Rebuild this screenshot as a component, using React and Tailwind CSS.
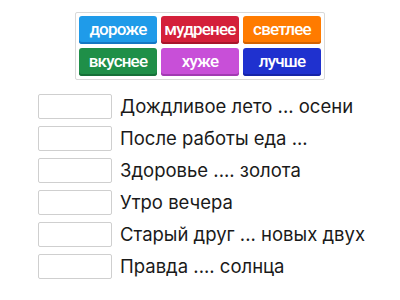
import React from "react";

const words = [
  { t: "дороже", c: "bg-[#1f9be9]", s: "shadow-[inset_0_-2px_0_#1577c4]" },
  { t: "мудренее", c: "bg-[#d4203a]", s: "shadow-[inset_0_-2px_0_#a8152b]" },
  { t: "светлее", c: "bg-[#ff7b00]", s: "shadow-[inset_0_-2px_0_#d46300]" },
  { t: "вкуснее", c: "bg-[#1f8f48]", s: "shadow-[inset_0_-2px_0_#167038]" },
  { t: "хуже", c: "bg-[#c84fd8]", s: "shadow-[inset_0_-2px_0_#a23ab2]" },
  { t: "лучше", c: "bg-[#1f31cf]", s: "shadow-[inset_0_-2px_0_#1624a8]" },
];

const rows = [
  "Дождливое лето ... осени",
  "После работы еда ...",
  "Здоровье .... золота",
  "Утро вечера",
  "Старый друг ... новых двух",
  "Правда .... солнца",
];

export default function App() {
  return (
    <div className="w-[400px] h-[300px] bg-white overflow-hidden font-['Inter',sans-serif]">
      <div className="flex justify-center pt-[12px]">
        <div className="grid grid-cols-3 gap-[4px] p-[3px] border border-[#d9d9d9] rounded-[2px] bg-white">
          {words.map((w) => (
            <div
              key={w.t}
              className={`w-[78px] h-[28px] rounded-[3px] flex items-center justify-center text-white text-[17px] font-medium tracking-[-0.8px] font-['Roboto',sans-serif] ${w.c} ${w.s}`}
            >
              {w.t}
            </div>
          ))}
        </div>
      </div>
      <div className="flex flex-col gap-[7px] pl-[38px] pt-[14px]">
        {rows.map((r) => (
          <div key={r} className="flex items-center">
            <div className="w-[74px] h-[25px] border border-[#cfcfcf] rounded-[2px] bg-white" />
            <span className="ml-[8px] text-[18.5px] text-[#1a1a1a] leading-[25px]">{r}</span>
          </div>
        ))}
      </div>
    </div>
  );
}
